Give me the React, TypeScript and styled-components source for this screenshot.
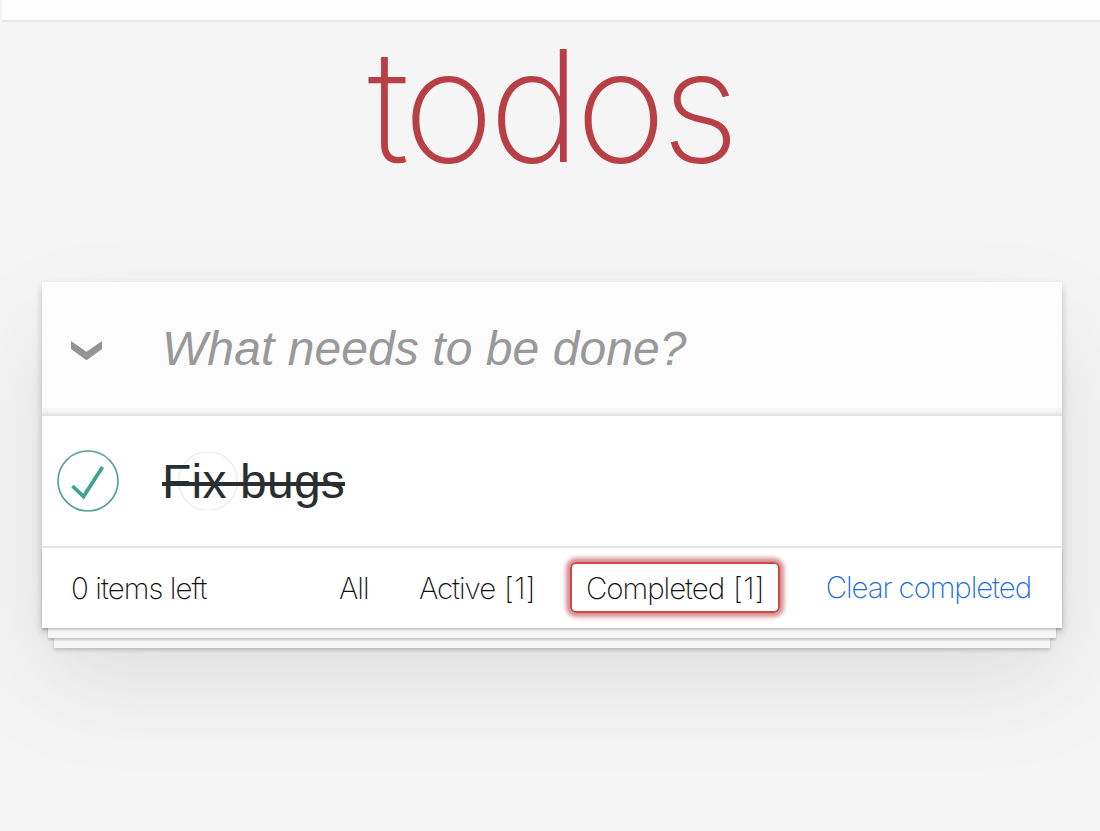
import React from 'react';
import styled, { createGlobalStyle } from 'styled-components';

const Global = createGlobalStyle`
  * { box-sizing: border-box; }
  html, body { margin: 0; background: #f5f5f5; }
  body { min-height: 831px; overflow: hidden; font-family: 'Liberation Sans', Arial, sans-serif; -webkit-font-smoothing: antialiased; }
  button, input { font: inherit; border: 0; background: none; padding: 0; margin: 0; }
`;

const Page = styled.div`
  height: 831px;
  overflow: hidden;
  display: flex;
  flex-direction: column;
`;

const TopBar = styled.div`
  height: 20px;
  margin-left: 2px;
  flex: none;
  background: #fdfdfd;
  box-shadow: 0 2px 0 #e9e9e9;
`;

const Title = styled.h1`
  margin: 0;
  height: 262px;
  padding-left: 2px;
  text-align: center;
  font: 200 155px/171px Inter, sans-serif;
  letter-spacing: -5.1px;
  color: #b83f45;
`;

const Card = styled.section`
  width: 1020px;
  margin-left: 42px;
  flex: none;
  background: #fff;
  box-shadow: 0 4px 8px rgba(0, 0, 0, 0.2), 0 50px 100px rgba(0, 0, 0, 0.1);
`;

const EntryRow = styled.div`
  height: 132px;
  display: flex;
  align-items: center;
  background: #fcfcfc;
  border-bottom: 2px solid #ebebeb;
  box-shadow: inset 0 -4px 1px #f5f5f5;
`;

const Toggle = styled.button`
  width: 120px;
  height: 130px;
  padding: 6px 0 0 28px;
  display: flex;
  align-items: center;
`;

const Entry = styled.input`
  width: 860px;
  height: 130px;
  padding-top: 2px;
  outline: none;
  font-size: 48px;
  letter-spacing: 0.07px;
  &::placeholder {
    font-style: italic;
    color: #999;
    opacity: 1;
  }
`;

const TodoList = styled.ul`
  margin: 0;
  padding: 0;
  list-style: none;
  border-top: 2px solid #e2e2e2;
`;

const TodoItem = styled.li`
  height: 130px;
  display: flex;
  align-items: center;
`;

const CheckCell = styled.span`
  width: 120px;
  height: 130px;
  padding-left: 14px;
  display: flex;
  align-items: center;
`;

const TodoText = styled.label`
  position: relative;
  z-index: 0;
  padding-top: 2px;
  font-size: 48px;
  line-height: 58px;
  letter-spacing: 0.2px;
  color: #2a2e30;
  text-decoration: line-through;
  text-decoration-thickness: 4px;
  text-decoration-skip-ink: none;
`;

const GhostRing = styled.svg`
  position: absolute;
  z-index: -1;
  left: 16px;
  top: 1px;
`;

const Footer = styled.footer`
  height: 82px;
  padding: 0 31px 0 29px;
  display: flex;
  align-items: center;
  border-top: 2px solid #e6e6e6;
  font: 150 29.5px/36px Inter, sans-serif;
  color: #111;
  box-shadow: 0 2px 2px rgba(0, 0, 0, 0.2), 0 16px 0 -6px #f6f6f6,
    0 18px 2px -6px rgba(0, 0, 0, 0.2), 0 32px 0 -12px #f6f6f6,
    0 34px 4px -12px rgba(0, 0, 0, 0.2);
`;

const Remaining = styled.span`
  width: 252px;
  flex: none;
  letter-spacing: -0.95px;
  white-space: nowrap;
`;

const Filter = styled.a<{ $width: number; $selected?: boolean }>`
  width: ${(p) => p.$width}px;
  height: 51px;
  margin: 0 20px 2px 0;
  padding: 2px 0 0 14px;
  display: flex;
  align-items: center;
  flex: none;
  border: 2px solid ${(p) => (p.$selected ? '#ce4646' : 'transparent')};
  border-radius: 6px;
  box-shadow: ${(p) => (p.$selected ? '0 0 4px 4px rgba(184, 63, 69, 0.6)' : 'none')};
  letter-spacing: -1.05px;
  white-space: nowrap;
`;

const Count = styled.span`
  margin-left: 9px;
  letter-spacing: 0.3px;
`;

const Clear = styled.button`
  margin: 0 0 2px auto;
  color: #1a6ddb;
  letter-spacing: -1.1px;
  white-space: nowrap;
`;

export default function App() {
  return (
    <Page>
      <Global />
      <TopBar />
      <Title>todos</Title>
      <Card>
        <EntryRow>
          <Toggle aria-label="Toggle all">
            <svg width="33" height="21" viewBox="0 0 33 21">
              <path d="M1 1L16.5 11.7L32 1V9L16.5 20.3L1 9Z" fill="#949494" />
            </svg>
          </Toggle>
          <Entry placeholder="What needs to be done?" />
        </EntryRow>
        <TodoList>
          <TodoItem>
            <CheckCell>
              <svg width="64" height="64" viewBox="0 0 64 64" fill="none">
                <circle cx="32" cy="32" r="30" stroke="#59a193" strokeWidth="1.7" />
                <path d="M16.5 37L27.5 47.5L46.5 18" stroke="#3ea390" strokeWidth="3.8" />
              </svg>
            </CheckCell>
            <TodoText>
              <GhostRing width="60" height="58" viewBox="0 0 60 58" fill="none">
                <circle cx="30" cy="29" r="29.3" stroke="#ededed" strokeWidth="1.5" />
              </GhostRing>
              Fix bugs
            </TodoText>
          </TodoItem>
        </TodoList>
        <Footer>
          <Remaining>0 items left</Remaining>
          <Filter $width={60}>All</Filter>
          <Filter $width={147}>
            Active<Count>[1]</Count>
          </Filter>
          <Filter $width={210} $selected>
            Completed<Count>[1]</Count>
          </Filter>
          <Clear>Clear completed</Clear>
        </Footer>
      </Card>
    </Page>
  );
}
